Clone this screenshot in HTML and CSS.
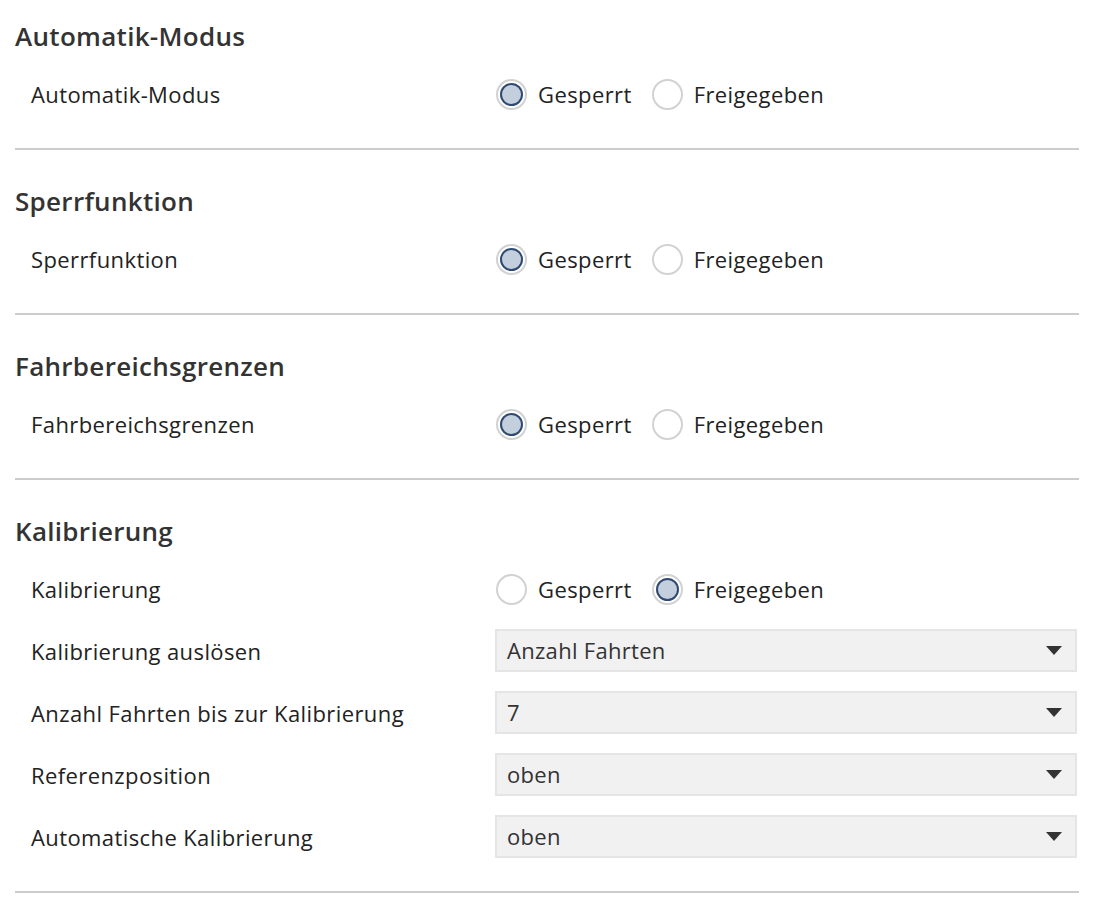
FILE: index.html
```html
<!DOCTYPE html>
<html lang="de">
<head>
<meta charset="utf-8">
<title>Einstellungen</title>
<link rel="stylesheet" href="styles.css">
</head>
<body>
<main class="page">
  <section class="section">
    <h2 class="section-title">Automatik-Modus</h2>
    <div class="rows">
      <div class="row">
        <span class="label">Automatik-Modus</span>
        <div class="radio-group">
          <label class="radio"><span class="dot checked"></span><span class="radio-text">Gesperrt</span></label>
          <label class="radio"><span class="dot"></span><span class="radio-text">Freigegeben</span></label>
        </div>
      </div>
    </div>
  </section>

  <section class="section">
    <h2 class="section-title">Sperrfunktion</h2>
    <div class="rows">
      <div class="row">
        <span class="label">Sperrfunktion</span>
        <div class="radio-group">
          <label class="radio"><span class="dot checked"></span><span class="radio-text">Gesperrt</span></label>
          <label class="radio"><span class="dot"></span><span class="radio-text">Freigegeben</span></label>
        </div>
      </div>
    </div>
  </section>

  <section class="section">
    <h2 class="section-title">Fahrbereichsgrenzen</h2>
    <div class="rows">
      <div class="row">
        <span class="label">Fahrbereichsgrenzen</span>
        <div class="radio-group">
          <label class="radio"><span class="dot checked"></span><span class="radio-text">Gesperrt</span></label>
          <label class="radio"><span class="dot"></span><span class="radio-text">Freigegeben</span></label>
        </div>
      </div>
    </div>
  </section>

  <section class="section">
    <h2 class="section-title">Kalibrierung</h2>
    <div class="rows">
      <div class="row">
        <span class="label">Kalibrierung</span>
        <div class="radio-group">
          <label class="radio"><span class="dot"></span><span class="radio-text">Gesperrt</span></label>
          <label class="radio"><span class="dot checked"></span><span class="radio-text">Freigegeben</span></label>
        </div>
      </div>
      <div class="row">
        <span class="label">Kalibrierung auslösen</span>
        <div class="select"><span class="select-value">Anzahl Fahrten</span><span class="caret"></span></div>
      </div>
      <div class="row">
        <span class="label">Anzahl Fahrten bis zur Kalibrierung</span>
        <div class="select"><span class="select-value">7</span><span class="caret"></span></div>
      </div>
      <div class="row">
        <span class="label">Referenzposition</span>
        <div class="select"><span class="select-value">oben</span><span class="caret"></span></div>
      </div>
      <div class="row">
        <span class="label">Automatische Kalibrierung</span>
        <div class="select"><span class="select-value">oben</span><span class="caret"></span></div>
      </div>
    </div>
  </section>
</main>
</body>
</html>
```

FILE: styles.css
```css
* { box-sizing: border-box; }

html, body {
  margin: 0;
  padding: 0;
  background: #ffffff;
}

body {
  font-family: "Open Sans", "Noto Sans", "Liberation Sans", sans-serif;
  color: #222222;
}

.page {
  width: 1064px;
  margin-left: 15px;
}

.section {
  padding: 33px 0 32px;
  border-bottom: 2px solid #cccccc;
}

.section:first-child {
  padding-top: 18px;
}

.section-title {
  margin: 0;
  height: 36px;
  line-height: 36px;
  font-size: 26px;
  font-weight: 600;
  letter-spacing: 0.3px;
  color: #333333;
}

.rows {
  margin-top: 18px;
  display: flex;
  flex-direction: column;
  gap: 18px;
}

.row {
  display: grid;
  grid-template-columns: 464px 1fr;
  align-items: center;
  height: 44px;
  padding-left: 16px;
  padding-right: 2px;
}

.label {
  font-size: 22px;
  letter-spacing: 0.4px;
  color: #222222;
}

.radio-group {
  display: flex;
  align-items: center;
  gap: 20px;
  padding-left: 1px;
}

.radio {
  display: flex;
  align-items: center;
  gap: 11px;
}

.dot {
  width: 31px;
  height: 31px;
  border-radius: 50%;
  border: 2px solid #d2d2d2;
  background: #ffffff;
  display: flex;
  align-items: center;
  justify-content: center;
}

.dot.checked::after {
  content: "";
  width: 19px;
  height: 19px;
  border-radius: 50%;
  border: 2px solid #2e4a72;
  background: #c4cfdd;
}

.radio-text {
  font-size: 22px;
  letter-spacing: 0.4px;
  color: #222222;
}

.select {
  height: 43px;
  margin-top: -2px;
  background: #f1f1f1;
  border: 2px solid #e5e5e5;
  display: flex;
  align-items: center;
  justify-content: space-between;
  padding: 0 13px 0 10px;
}

.select-value {
  font-size: 22px;
  letter-spacing: 0.3px;
  color: #333333;
}

.caret {
  width: 0;
  height: 0;
  border-left: 8px solid transparent;
  border-right: 8px solid transparent;
  border-top: 9px solid #333333;
}
```
